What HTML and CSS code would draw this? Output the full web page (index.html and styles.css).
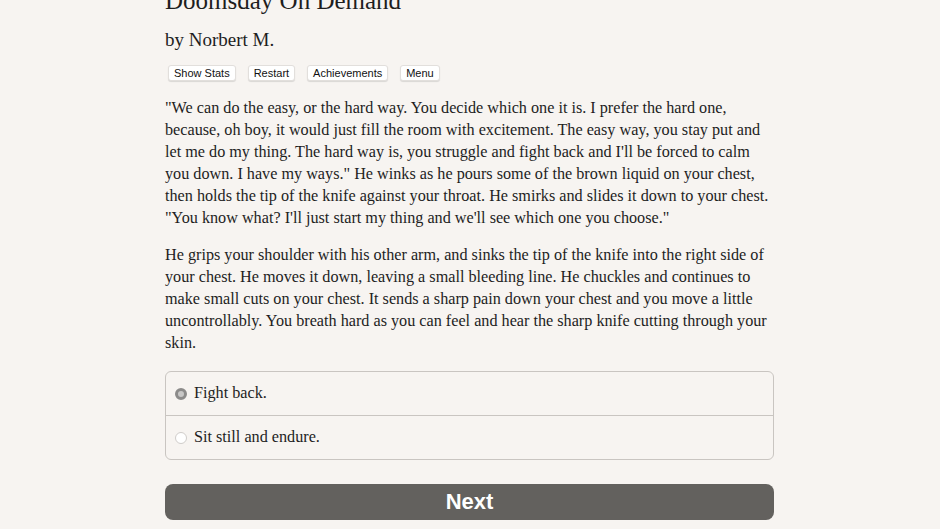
FILE: index.html
```html
<!DOCTYPE html>
<html>
<head>
<meta charset="utf-8">
<link rel="stylesheet" href="styles.css">
</head>
<body>
<div class="page">
  <h1 class="title">Doomsday On Demand</h1>
  <h2 class="author">by Norbert M.</h2>
  <div class="buttons">
    <button class="tbtn">Show Stats</button>
    <button class="tbtn">Restart</button>
    <button class="tbtn">Achievements</button>
    <button class="tbtn">Menu</button>
  </div>
  <p class="para">"We can do the easy, or the hard way. You decide which one it is. I prefer the hard one, because, oh boy, it would just fill the room with excitement. The easy way, you stay put and let me do my thing. The hard way is, you struggle and fight back and I'll be forced to calm you down. I have my ways." He winks as he pours some of the brown liquid on your chest, then holds the tip of the knife against your throat. He smirks and slides it down to your chest. "You know what? I'll just start my thing and we'll see which one you choose."</p>
  <p class="para">He grips your shoulder with his other arm, and sinks the tip of the knife into the right side of your chest. He moves it down, leaving a small bleeding line. He chuckles and continues to make small cuts on your chest. It sends a sharp pain down your chest and you move a little uncontrollably. You breath hard as you can feel and hear the sharp knife cutting through your skin.</p>
  <div class="choices">
    <label class="choice"><span class="radio checked"></span>Fight back.</label>
    <label class="choice"><span class="radio"></span>Sit still and endure.</label>
  </div>
  <button class="next">Next</button>
</div>
</body>
</html>
```
FILE: styles.css
```css
html, body {
  margin: 0;
  padding: 0;
  background: #f7f4f1;
}
body {
  font-family: "Liberation Serif", serif;
  color: #1e1e1e;
  overflow: hidden;
  height: 529px;
}
.page {
  width: 609px;
  margin: -14px 0 0 165px;
}
.title {
  font-size: 25px;
  font-weight: normal;
  margin: 0;
  line-height: 30px;
}
.author {
  font-size: 19px;
  font-weight: normal;
  margin: 12px 0 0;
  line-height: 24px;
}
.buttons {
  display: flex;
  gap: 12px;
  margin-top: 13px;
  padding-left: 3px;
}
.tbtn {
  font-family: "Liberation Sans", sans-serif;
  font-size: 11px;
  color: #111;
  background: #fff;
  border: 1px solid #e2dfdc;
  border-radius: 3px;
  padding: 0 5px;
  height: 16px;
  line-height: 14px;
  box-shadow: 0 1px 1px rgba(0,0,0,0.12);
}
.para {
  font-size: 16.2px;
  line-height: 22px;
  margin: 16px 0 0;
}
.para + .para {
  margin-top: 15px;
}
.choices {
  margin-top: 17px;
  border: 1px solid #c9c5c1;
  border-radius: 6px;
}
.choice {
  display: flex;
  align-items: center;
  height: 43px;
  padding-left: 9px;
  font-size: 16.2px;
}
.choice + .choice {
  border-top: 1px solid #c9c5c1;
}
.radio {
  width: 12px;
  height: 12px;
  border-radius: 50%;
  background: #fff;
  border: 1px solid #d0cdca;
  box-sizing: border-box;
  margin-right: 7px;
}
.radio.checked {
  background: #c8c7c6;
  border: 3px solid #8c8b8a;
}
.next {
  display: block;
  width: 100%;
  margin-top: 24px;
  height: 36px;
  border: none;
  border-radius: 8px;
  background: #63615e;
  color: #fff;
  font-family: "Liberation Sans", sans-serif;
  font-weight: bold;
  font-size: 22px;
}
```
